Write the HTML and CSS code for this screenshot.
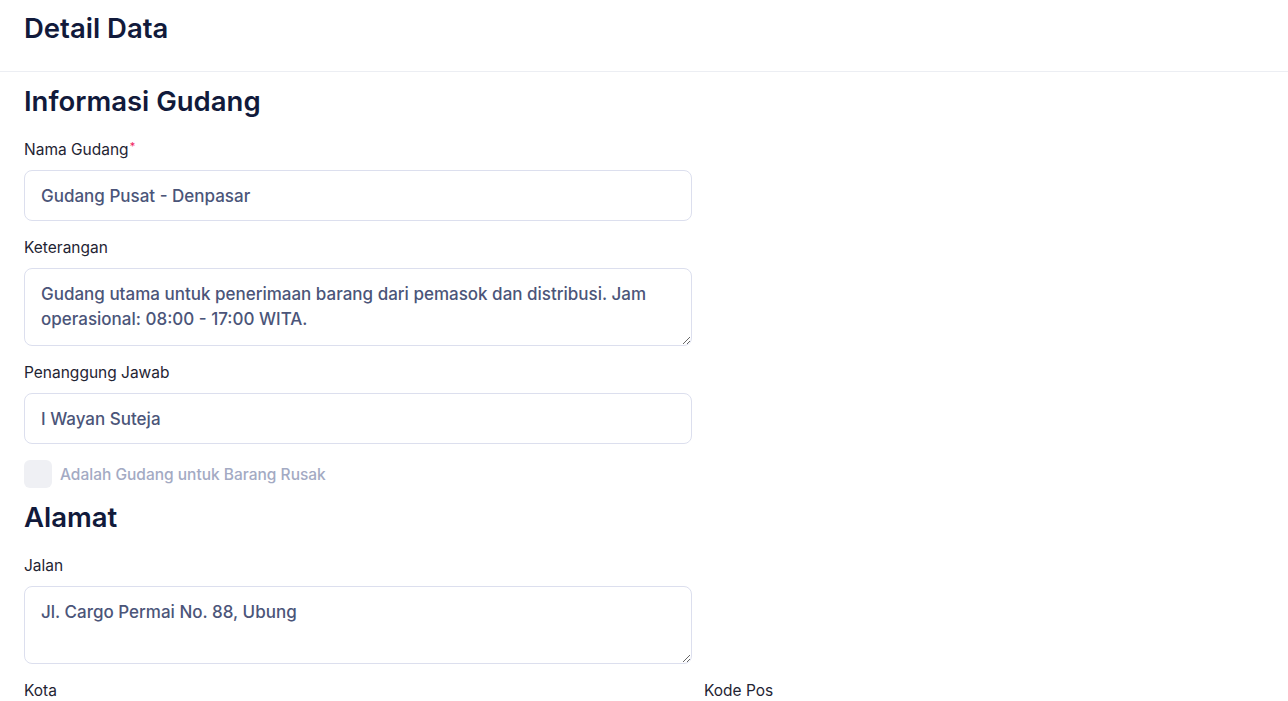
FILE: index.html
```html
<!DOCTYPE html>
<html lang="id">
<head>
  <meta charset="UTF-8">
  <meta name="viewport" content="width=device-width, initial-scale=1.0">
  <title>Detail Data</title>
  <link rel="stylesheet" href="styles.css">
</head>
<body>
  <div class="page-header">
    <h1>Detail Data</h1>
  </div>

  <div class="content">
    <h2>Informasi Gudang</h2>

    <div class="field">
      <label for="nama">Nama Gudang<span class="req">*</span></label>
      <input type="text" id="nama" value="Gudang Pusat - Denpasar">
    </div>

    <div class="field">
      <label for="keterangan">Keterangan</label>
      <textarea id="keterangan">Gudang utama untuk penerimaan barang dari pemasok dan distribusi. Jam operasional: 08:00 - 17:00 WITA.</textarea>
    </div>

    <div class="field">
      <label for="pj">Penanggung Jawab</label>
      <input type="text" id="pj" value="I Wayan Suteja">
    </div>

    <label class="check">
      <span class="box"></span>
      Adalah Gudang untuk Barang Rusak
    </label>

    <h2>Alamat</h2>

    <div class="field">
      <label for="jalan">Jalan</label>
      <textarea id="jalan">Jl. Cargo Permai No. 88, Ubung</textarea>
    </div>

    <div class="row">
      <div class="field">
        <label for="kota">Kota</label>
      </div>
      <div class="field">
        <label for="kodepos">Kode Pos</label>
      </div>
    </div>
  </div>
</body>
</html>
```

FILE: styles.css
```css
body { margin: 0; font-family: Inter, "Noto Sans", sans-serif; background: #fff; color: #1f2433; overflow: hidden; }
.page-header { height: 71px; border-bottom: 1px solid #eceef3; padding: 0 24px; display: flex; align-items: center; }
.page-header h1 { margin: 0 0 15px; font-size: 27.5px; font-weight: 600; color: #111a3b; }
.content { padding: 11px 24px 0; }
h2 { margin: 0; font-size: 27.5px; line-height: 36px; font-weight: 600; color: #111a3b; }
.field { width: 668px; margin-top: 20px; }
.field + .field { margin-top: 16px; }
.field label { display: block; font-size: 15.5px; line-height: 22px; margin-bottom: 9px; color: #1f2433; }
.req { color: #f0245e; font-size: 11px; vertical-align: top; position: relative; top: -4px; margin-left: 1px; }
input[type=text], textarea { box-sizing: border-box; width: 100%; font-family: inherit; font-size: 17px; font-weight: 500; color: #4b5579; border: 1px solid #dcdfee; border-radius: 8px; background: #fff; padding: 0 16px; outline: none; }
input[type=text] { height: 51px; }
textarea { height: 78px; padding: 13px 16px; line-height: 25px; resize: vertical; display: block; }
.check { display: flex; align-items: center; gap: 8px; margin-top: 16px; margin-bottom: 11px; font-size: 15.5px; font-weight: 500; color: #a3aac3; }
.box { width: 28px; height: 28px; border-radius: 6px; background: #eff0f4; }
.row { display: grid; grid-template-columns: 668px 1fr; column-gap: 12px; }
.row .field { width: auto; margin-top: 16px; }
```
